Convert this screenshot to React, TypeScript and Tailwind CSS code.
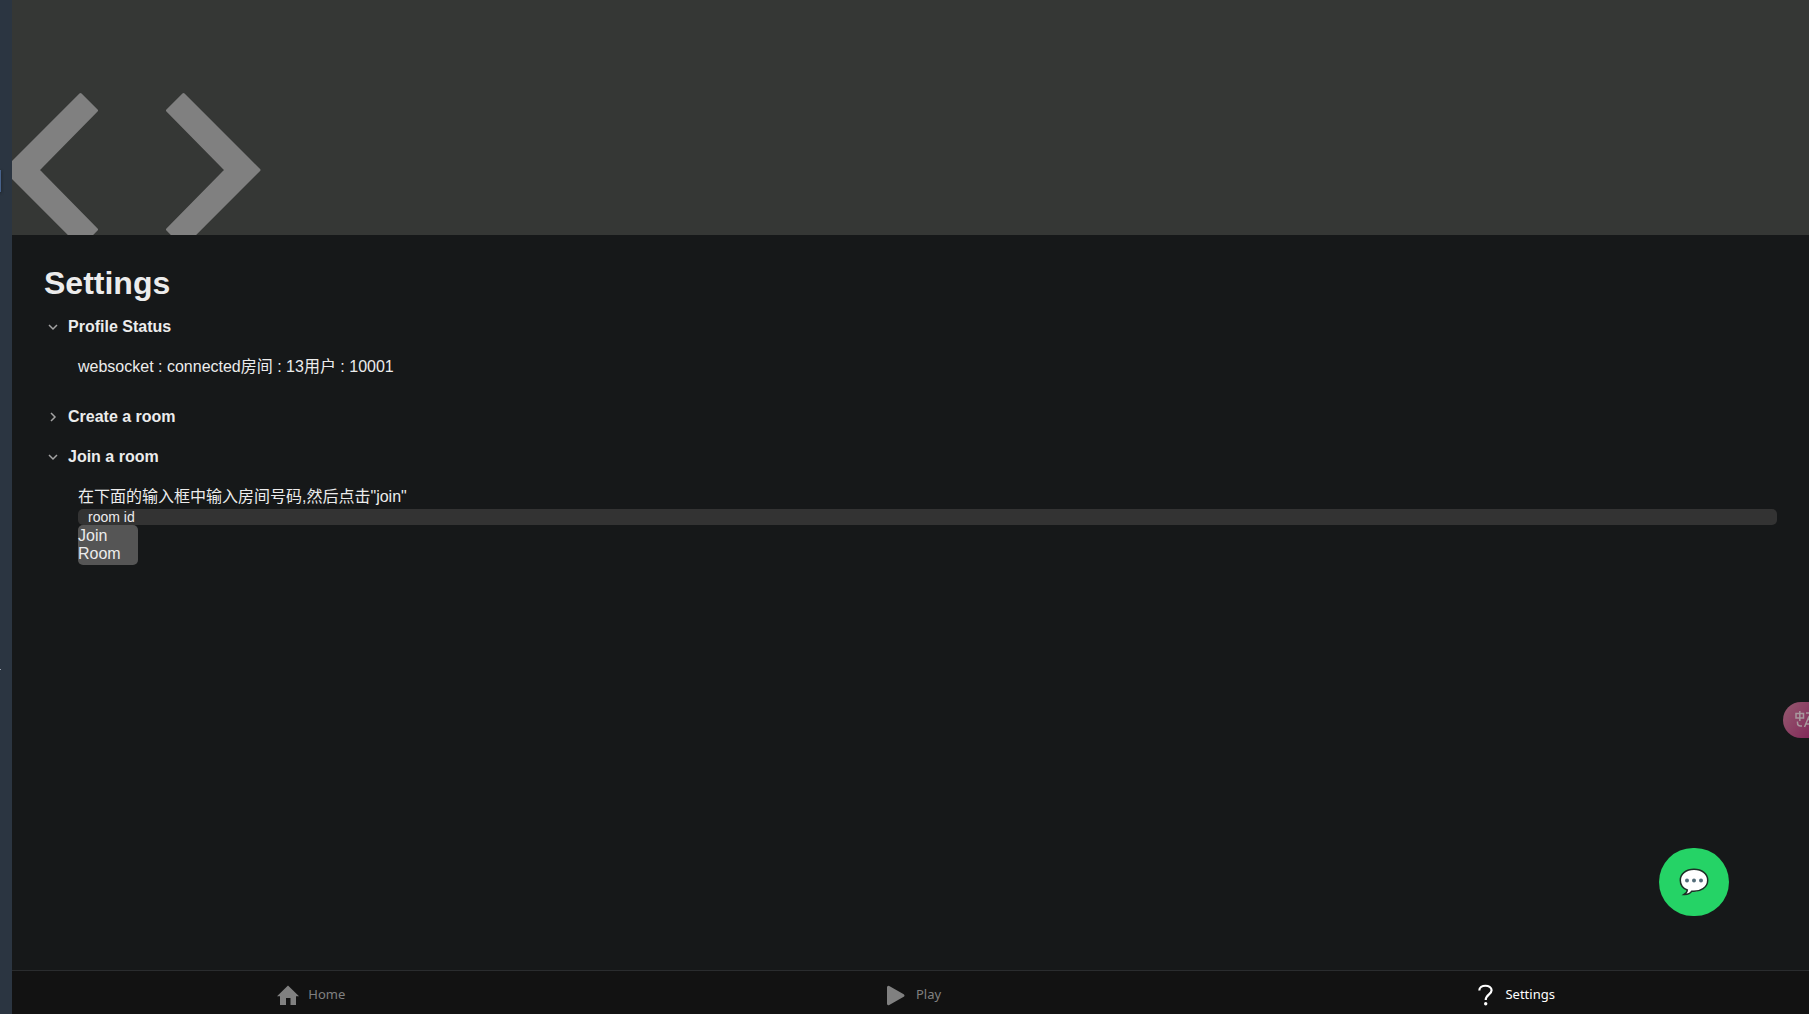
import type { ReactNode } from 'react'

function Section({ title, open, children }: { title: string; open?: boolean; children?: ReactNode }) {
  return (
    <details open={open} className="group">
      <summary className="flex h-10 cursor-pointer list-none items-center gap-2 pl-0.5">
        <svg
          viewBox="0 0 14 14"
          className="h-3.5 w-3.5 -rotate-90 group-open:rotate-0"
          fill="none"
          stroke="#a3a3a3"
          strokeWidth="1.5"
        >
          <path d="M3 5l4 4 4-4" />
        </svg>
        <h2 className="font-bold">{title}</h2>
      </summary>
      <div className="pl-8.5">{children}</div>
    </details>
  )
}

function Sidebar() {
  return (
    <aside className="relative w-3 shrink-0 bg-[#2b3541]">
      <span className="absolute left-0 top-[170px] h-[22px] w-px bg-[#47618a] shadow-[0_1px_3px_#111]" />
      <span className="absolute left-0 top-[669px] h-px w-px bg-[#9ca3af]" />
    </aside>
  )
}

function Hero() {
  return (
    <header className="h-[235px] overflow-hidden bg-[#353735]">
      <svg viewBox="12 0 260 260" className="h-[260px] w-[260px]" fill="#808080" stroke="#808080" strokeWidth="3" strokeLinejoin="round">
        <path d="M80.500 94.500L96.500 110.500L38 170L96.500 229.500L80.500 245.500L5 170Z" />
        <path d="M183.500 94.500L167.500 110.500L226 170L167.500 229.500L183.500 245.500L259 170Z" />
      </svg>
    </header>
  )
}

function HomeIcon() {
  return (
    <svg viewBox="0 0 24 24" className="h-6 w-6" fill="currentColor">
      <path d="M12 2.500L1 13.200h3V22h6v-7h4.500v7h5.500v-8.800h3z" />
    </svg>
  )
}

function PlayIcon() {
  return (
    <svg viewBox="0 0 24 24" className="h-6 w-6" fill="currentColor" stroke="currentColor" strokeWidth="3" strokeLinejoin="round">
      <path d="M4.500 4.200L19 12.500L4.500 20.800Z" />
    </svg>
  )
}

function QuestionIcon() {
  return (
    <svg viewBox="0 0 24 24" className="h-6 w-6" fill="none" stroke="currentColor" strokeWidth="2.200">
      <path d="M6.300 7.500C6.300 1.200 18.600 1.200 18.600 7.300C18.600 11.300 12.700 11.500 12.700 17" />
      <circle cx="12.700" cy="20.700" r="1.700" fill="currentColor" stroke="none" />
    </svg>
  )
}

function BottomNav() {
  return (
    <nav className="h-11 overflow-hidden border-t border-[#2a2c2e] bg-[#121212] font-['Noto_Sans',sans-serif] text-[13px] text-[#808080]">
      <div className="-ml-0.5 -mr-1.5 grid h-full grid-cols-3">
        <a href="#home" className="flex items-center justify-center gap-2 pt-1">
          <HomeIcon />
          Home
        </a>
        <a href="#play" className="flex items-center justify-center gap-2 pt-1">
          <PlayIcon />
          Play
        </a>
        <a href="#settings" className="flex items-center justify-center gap-2 pt-1 text-white">
          <QuestionIcon />
          Settings
        </a>
      </div>
    </nav>
  )
}

function ChatButton() {
  return (
    <button
      aria-label="Chat"
      className="fixed bottom-[98px] right-20 flex h-[68px] w-[70px] items-center justify-center rounded-full bg-[#25d366]"
    >
      <svg viewBox="0 0 30 28" className="h-7 w-[30px]">
        <path
          d="M15 1.300C7 1.300 1.300 6 1.300 12.200C1.300 16.800 4 20.300 8.300 22C8.200 23.800 7 25.300 5 26.500C9 26.700 11.500 25.300 12.800 23.200C21.800 24 28.700 19.200 28.700 12.200C28.700 6 23 1.300 15 1.300Z"
          fill="#fff"
          stroke="#1c2f26"
          strokeWidth="1.500"
        />
        <circle cx="8" cy="12.500" r="2" fill="#546e7a" />
        <circle cx="15" cy="12.500" r="2" fill="#546e7a" />
        <circle cx="22" cy="12.500" r="2" fill="#546e7a" />
      </svg>
    </button>
  )
}

function TranslateButton() {
  return (
    <button
      aria-label="Translate"
      className="fixed right-0 top-[702px] h-9 w-[26px] overflow-hidden rounded-l-full bg-linear-to-br from-[#955a70] to-[#82295a]"
    >
      <svg viewBox="0 0 26 36" className="h-9 w-[26px]" fill="none" stroke="#a8989d" strokeWidth="1.500">
        <path d="M13 11.500h7.500v4.500H13zM16.800 9v10M23 11h3M14.500 19.500v1.500q0 3 3 3h1.500M21.500 25l4-9.500L29 25M23 22h4" />
      </svg>
    </button>
  )
}

export default function App() {
  return (
    <div className="flex min-h-screen bg-[#161819] font-['Liberation_Sans','Noto_Sans_CJK_SC',sans-serif] text-base text-[#ececec]">
      <Sidebar />
      <div className="flex min-w-0 flex-1 flex-col">
        <Hero />
        <main className="flex-1 px-8 pt-7">
          <h1 className="pb-1 text-[32px] font-bold leading-10">Settings</h1>
          <Section title="Profile Status" open>
            <p className="flex h-[50px] items-start pt-2 leading-6">websocket : connected房间 : 13用户 : 10001</p>
          </Section>
          <Section title="Create a room" />
          <Section title="Join a room" open>
            <label htmlFor="room-id" className="block pt-2 leading-6">
              在下面的输入框中输入房间号码,然后点击"join"
            </label>
            <input
              id="room-id"
              placeholder="room id"
              className="block h-4 w-full rounded-[5px] bg-[#333] px-2.5 text-sm leading-4 outline-none placeholder:text-[#ececec]"
            />
            <button className="block h-10 w-15 rounded-[5px] bg-[#555] text-left leading-[18px]">Join Room</button>
          </Section>
        </main>
        <BottomNav />
      </div>
      <ChatButton />
      <TranslateButton />
    </div>
  )
}
